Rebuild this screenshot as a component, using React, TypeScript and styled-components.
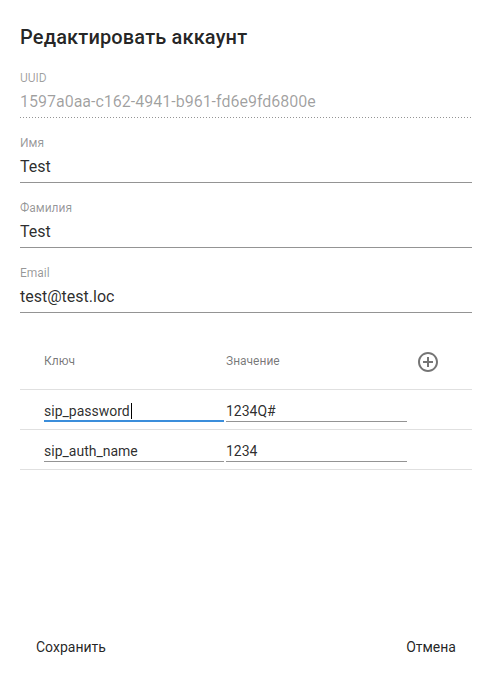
import React from "react";
import styled, { createGlobalStyle } from "styled-components";

const GlobalStyle = createGlobalStyle`
  html, body {
    margin: 0;
    padding: 0;
    background: #fff;
  }
  body {
    font-family: Roboto, "Noto Sans", "Liberation Sans", sans-serif;
    color: rgba(0, 0, 0, 0.87);
  }
`;

type Attr = { key: string; value: string; focused?: boolean };

const attributes: Attr[] = [
  { key: "sip_password", value: "1234Q#", focused: true },
  { key: "sip_auth_name", value: "1234" },
];

const AddIcon: React.FC = () => (
  <svg width="24" height="24" viewBox="0 0 24 24" fill="rgba(0,0,0,0.54)">
    <path d="M13 7h-2v4H7v2h4v4h2v-4h4v-2h-4V7zm-1-5C6.48 2 2 6.48 2 12s4.48 10 10 10 10-4.48 10-10S17.52 2 12 2zm0 18c-4.41 0-8-3.59-8-8s3.59-8 8-8 8 3.59 8 8-3.59 8-8 8z" />
  </svg>
);

export default function App() {
  return (
    <>
      <GlobalStyle />
      <Dialog>
        <Title>Редактировать аккаунт</Title>
        <Content>
          <Field>
            <Label disabled>UUID</Label>
            <Input disabled>1597a0aa-c162-4941-b961-fd6e9fd6800e</Input>
          </Field>
          <Field>
            <Label>Имя</Label>
            <Input>Test</Input>
          </Field>
          <Field>
            <Label>Фамилия</Label>
            <Input>Test</Input>
          </Field>
          <Field>
            <Label>Email</Label>
            <Input>test@test.loc</Input>
          </Field>

          <Table>
            <HeadRow>
              <HeadCell>Ключ</HeadCell>
              <HeadCell>Значение</HeadCell>
              <IconCell>
                <AddIcon />
              </IconCell>
            </HeadRow>
            {attributes.map((a) => (
              <BodyRow key={a.key}>
                <KeyInput focused={a.focused}>
                  {a.key}
                  {a.focused && <Caret />}
                </KeyInput>
                <ValueInput>{a.value}</ValueInput>
                <div />
              </BodyRow>
            ))}
          </Table>
        </Content>
        <Actions>
          <Button>Сохранить</Button>
          <Button>Отмена</Button>
        </Actions>
      </Dialog>
    </>
  );
}

const Dialog = styled.div`
  display: flex;
  flex-direction: column;
  min-height: 100vh;
  box-sizing: border-box;
`;

const Title = styled.h2`
  margin: 21px 20px 0;
  font-size: 20px;
  font-weight: 500;
  line-height: 32px;
  letter-spacing: 0.15px;
  color: rgba(0, 0, 0, 0.87);
`;

const Content = styled.div`
  flex: 1;
  display: flex;
  flex-direction: column;
  gap: 19px;
  padding: 19px 20px 0;
`;

const Field = styled.div`
  display: flex;
  flex-direction: column;
`;

const Label = styled.label<{ disabled?: boolean }>`
  font-size: 12px;
  line-height: 12px;
  height: 12px;
  margin-bottom: 2px;
  color: ${(p) => (p.disabled ? "rgba(0,0,0,0.38)" : "rgba(0,0,0,0.42)")};
`;

const Input = styled.div<{ disabled?: boolean }>`
  font-size: 16px;
  line-height: 19px;
  padding: 6px 0 6px;
  color: ${(p) => (p.disabled ? "rgba(0,0,0,0.38)" : "rgba(0,0,0,0.84)")};
  border-bottom: ${(p) => (p.disabled ? "none" : "1px solid rgba(0,0,0,0.42)")};
  ${(p) =>
    p.disabled &&
    `
    padding-bottom: 7px;
    background-image: linear-gradient(to right, rgba(0,0,0,0.42) 34%, transparent 0%);
    background-size: 3px 1px;
    background-position: left bottom;
    background-repeat: repeat-x;
  `}
`;

const Table = styled.div`
  margin-top: 2px;
  display: flex;
  flex-direction: column;
`;

const HeadRow = styled.div`
  display: grid;
  grid-template-columns: 182px 181px 1fr;
  align-items: center;
  height: 56px;
  box-sizing: border-box;
  padding-left: 24px;
  border-bottom: 1px solid #e0e0e0;
`;

const HeadCell = styled.div`
  font-size: 12px;
  line-height: 14px;
  color: rgba(0, 0, 0, 0.54);
  margin-top: -2px;
`;

const IconCell = styled.div`
  display: flex;
  padding-left: 9px;
`;

const BodyRow = styled.div`
  display: grid;
  grid-template-columns: 182px 181px 1fr;
  align-items: start;
  height: 40px;
  box-sizing: border-box;
  padding: 13px 0 0 24px;
  border-bottom: 1px solid #e0e0e0;
`;

const CellInput = styled.div`
  font-size: 14px;
  line-height: 16px;
  height: 16px;
  padding-bottom: 2px;
  color: rgba(0, 0, 0, 0.84);
  white-space: nowrap;
`;

const KeyInput = styled(CellInput)<{ focused?: boolean }>`
  width: 180px;
  border-bottom: ${(p) =>
    p.focused ? "2px solid #3b8edb" : "1px solid rgba(0,0,0,0.42)"};
  ${(p) => p.focused && "padding-bottom: 1px;"}
`;

const ValueInput = styled(CellInput)`
  border-bottom: 1px solid rgba(0, 0, 0, 0.42);
`;

const Caret = styled.span`
  display: inline-block;
  width: 1px;
  height: 16px;
  margin-left: 1px;
  vertical-align: top;
  background: #000;
`;

const Actions = styled.div`
  display: flex;
  justify-content: space-between;
  padding: 0 20px 11px;
`;

const Button = styled.button`
  border: none;
  background: transparent;
  padding: 6px 16px;
  font-family: inherit;
  font-size: 14px;
  line-height: 24px;
  color: rgba(0, 0, 0, 0.87);
  cursor: pointer;
`;
